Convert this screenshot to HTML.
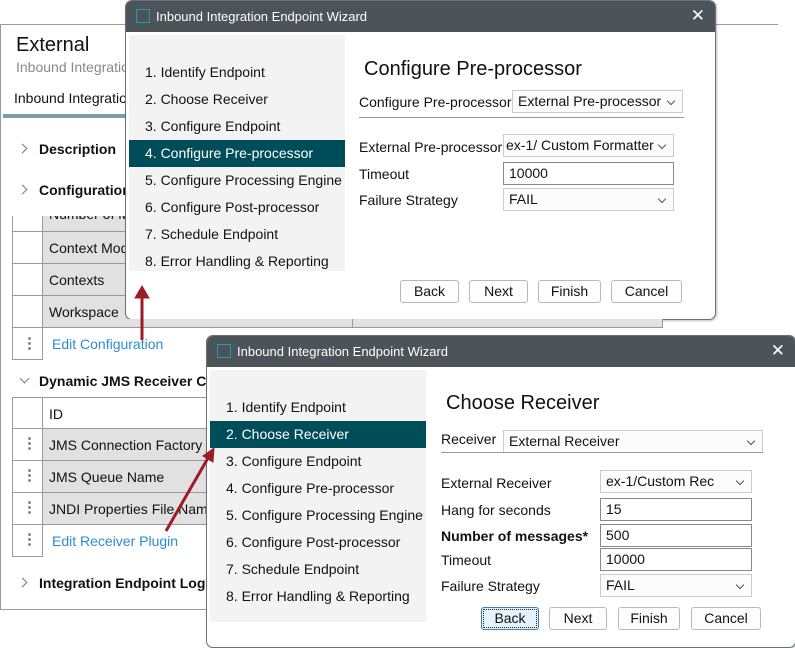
<!DOCTYPE html>
<html><head><meta charset="utf-8"><style>
*{margin:0;padding:0;box-sizing:border-box}
body{width:795px;height:647px;background:#fff;position:relative;overflow:hidden;font-family:"Liberation Sans",sans-serif;font-size:14px;color:#111}
.a{position:absolute;white-space:nowrap}
.dlg{position:absolute;background:#fff;border:1px solid #6b7175;border-radius:7px;overflow:hidden;box-shadow:1px 1px 2px rgba(0,0,0,.25)}
.tb{position:absolute;left:0;top:0;right:0;height:31px;background:#4d5459;color:#fff;font-size:13px}
.tb .ic{position:absolute;left:10px;top:8px;width:14px;height:14px;border:1.5px solid #1aa3b3}
.tb .t{position:absolute;left:30px;top:8px}
.tb .x{position:absolute;right:10px;top:5px;font-size:17px;font-weight:300}
.nav{position:absolute;background:#f3f3f3}
.nav div{position:absolute;left:0;right:0;height:27px;line-height:27px;padding-left:16px;font-size:14px;white-space:nowrap;overflow:hidden}
.nav .sel{background:#004d5a;color:#fff}
.fld{position:absolute;border:1px solid #b5b5b5;background:#fff;height:23px;line-height:21px;padding-left:5px;font-size:14px;white-space:nowrap;overflow:hidden}
.sl{border-color:#ccc;background:#fcfcfc}
.sl:after{content:"";position:absolute;right:8px;top:7px;width:5px;height:5px;border-right:1px solid #555;border-bottom:1px solid #555;transform:rotate(45deg)}
.btn{position:absolute;height:23px;border:1px solid #b8b8b8;border-radius:3px;background:#fdfdfd;text-align:center;line-height:21px;font-size:14px}
.h{position:absolute;font-size:20px}
.g{background:#e1e1e1}
.dots{position:absolute;width:3px}
.dots i{display:block;width:3px;height:3px;border-radius:50%;background:#888;margin-bottom:2px}
.chev{position:absolute;width:7px;height:7px;border-right:1.3px solid #777;border-top:1.3px solid #777;transform:rotate(45deg)}
.b{font-weight:bold}
</style></head><body>

<div class="a" style="left:0;top:24px;width:778px;height:1px;background:#9a9a9a"></div>
<div class="a" style="left:0;top:24px;width:1px;height:586px;background:#9a9a9a"></div>
<div class="a" style="left:0;top:609px;width:210px;height:1px;background:#9a9a9a"></div>
<div class="a" style="left:16px;top:34px;font-size:20px">External</div>
<div class="a" style="left:16px;top:59px;color:#888">Inbound Integration</div>
<div class="a" style="left:14px;top:90px">Inbound Integration</div>
<div class="a" style="left:3px;top:114px;width:125px;height:4px;background:#7a9ea6"></div>
<div class="chev" style="left:19px;top:145px"></div>
<div class="a b" style="left:39px;top:141px">Description</div>
<div class="chev" style="left:19px;top:186px"></div>
<div class="a b" style="left:39px;top:182px">Configuration</div>

<div class="a g" style="left:42px;top:216px;width:620px;height:111px"></div>
<div class="a" style="left:12px;top:216px;width:1px;height:144px;background:#999"></div>
<div class="a" style="left:42px;top:216px;width:1px;height:144px;background:#999"></div>
<div class="a" style="left:352px;top:216px;width:1px;height:111px;background:#999"></div>
<div class="a" style="left:662px;top:216px;width:1px;height:111px;background:#999"></div>
<div class="a" style="left:12px;top:231px;width:650px;height:1px;background:#999"></div>
<div class="a" style="left:12px;top:263px;width:650px;height:1px;background:#999"></div>
<div class="a" style="left:12px;top:295px;width:650px;height:1px;background:#999"></div>
<div class="a" style="left:12px;top:327px;width:650px;height:1px;background:#999"></div>
<div class="a" style="left:12px;top:359px;width:31px;height:1px;background:#999"></div>
<div class="a" style="left:49px;top:216px;height:6px;overflow:hidden;width:80px"><div style="margin-top:-10px">Number of M</div></div>
<div class="a" style="left:49px;top:240px">Context Mode</div>
<div class="a" style="left:49px;top:272px">Contexts</div>
<div class="a" style="left:49px;top:304px">Workspace</div>
<div class="dots" style="left:28px;top:337px"><i></i><i></i><i></i></div>
<div class="a" style="left:52px;top:336px;color:#2a8dd4">Edit Configuration</div>

<div class="chev" style="left:21px;top:375px;transform:rotate(135deg)"></div>
<div class="a b" style="left:39px;top:373px">Dynamic JMS Receiver Config</div>
<div class="a g" style="left:42px;top:428px;width:170px;height:96px"></div>
<div class="a" style="left:12px;top:397px;width:1px;height:160px;background:#999"></div>
<div class="a" style="left:42px;top:397px;width:1px;height:160px;background:#999"></div>
<div class="a" style="left:12px;top:397px;width:200px;height:1px;background:#999"></div>
<div class="a" style="left:12px;top:428px;width:200px;height:1px;background:#999"></div>
<div class="a" style="left:12px;top:460px;width:200px;height:1px;background:#999"></div>
<div class="a" style="left:12px;top:492px;width:200px;height:1px;background:#999"></div>
<div class="a" style="left:12px;top:524px;width:200px;height:1px;background:#999"></div>
<div class="a" style="left:12px;top:556px;width:31px;height:1px;background:#999"></div>
<div class="a" style="left:49px;top:406px">ID</div>
<div class="dots" style="left:28px;top:437px"><i></i><i></i><i></i></div>
<div class="a" style="left:49px;top:437px">JMS Connection Factory Name</div>
<div class="dots" style="left:28px;top:469px"><i></i><i></i><i></i></div>
<div class="a" style="left:49px;top:469px">JMS Queue Name</div>
<div class="dots" style="left:28px;top:501px"><i></i><i></i><i></i></div>
<div class="a" style="left:49px;top:501px">JNDI Properties File Name</div>
<div class="dots" style="left:28px;top:533px"><i></i><i></i><i></i></div>
<div class="a" style="left:52px;top:533px;color:#2a8dd4">Edit Receiver Plugin</div>
<div class="chev" style="left:19px;top:579px"></div>
<div class="a b" style="left:39px;top:575px">Integration Endpoint Log</div>

<div class="dlg" style="left:125px;top:0;width:591px;height:320px">
 <div class="tb"><div class="ic"></div><div class="t">Inbound Integration Endpoint Wizard</div><div class="x">✕</div></div>
 <div class="nav" style="left:3px;top:34px;width:216px;height:236px">
  <div style="top:24px">1. Identify Endpoint</div>
  <div style="top:51px">2. Choose Receiver</div>
  <div style="top:78px">3. Configure Endpoint</div>
  <div class="sel" style="top:105px">4. Configure Pre-processor</div>
  <div style="top:132px">5. Configure Processing Engine</div>
  <div style="top:159px">6. Configure Post-processor</div>
  <div style="top:186px">7. Schedule Endpoint</div>
  <div style="top:213px">8. Error Handling &amp; Reporting</div>
 </div>
 <div class="h" style="left:238px;top:57px">Configure Pre-processor</div>
 <div class="a" style="left:233px;top:93px">Configure Pre-processor</div>
 <div class="fld sl" style="left:386px;top:89px;width:171px">External Pre-processor</div>
 <div class="a" style="left:233px;top:116px;width:325px;height:1px;background:#999"></div>
 <div class="a" style="left:233px;top:138px">External Pre-processor</div>
 <div class="fld sl" style="left:377px;top:133px;width:171px;padding-left:2px">ex-1/ Custom Formatter</div>
 <div class="a" style="left:233px;top:165px">Timeout</div>
 <div class="fld" style="left:377px;top:161px;width:171px;border-color:#888">10000</div>
 <div class="a" style="left:233px;top:191px">Failure Strategy</div>
 <div class="fld sl" style="left:377px;top:187px;width:171px">FAIL</div>
 <div class="btn" style="left:274px;top:279px;width:59px">Back</div>
 <div class="btn" style="left:343px;top:279px;width:59px">Next</div>
 <div class="btn" style="left:412px;top:279px;width:63px">Finish</div>
 <div class="btn" style="left:485px;top:279px;width:71px">Cancel</div>
</div>
<div class="a" style="left:125px;top:319px;width:538px;height:9px;background:#e1e1e1;border-right:1px solid #999;border-bottom:1px solid #999"></div>
<div class="a" style="left:352px;top:319px;width:1px;height:8px;background:#999"></div>

<div class="dlg" style="left:206px;top:335px;width:590px;height:313px">
 <div class="tb"><div class="ic"></div><div class="t">Inbound Integration Endpoint Wizard</div><div class="x">✕</div></div>
 <div class="nav" style="left:3px;top:34px;width:216px;height:252px">
  <div style="top:24px">1. Identify Endpoint</div>
  <div class="sel" style="top:51px">2. Choose Receiver</div>
  <div style="top:78px">3. Configure Endpoint</div>
  <div style="top:105px">4. Configure Pre-processor</div>
  <div style="top:132px">5. Configure Processing Engine</div>
  <div style="top:159px">6. Configure Post-processor</div>
  <div style="top:186px">7. Schedule Endpoint</div>
  <div style="top:213px">8. Error Handling &amp; Reporting</div>
 </div>
 <div class="h" style="left:239px;top:56px">Choose Receiver</div>
 <div class="a" style="left:234px;top:95px">Receiver</div>
 <div class="fld sl" style="left:296px;top:94px;width:260px">External Receiver</div>
 <div class="a" style="left:234px;top:116px;width:322px;height:1px;background:#999"></div>
 <div class="a" style="left:234px;top:139px">External Receiver</div>
 <div class="fld sl" style="left:393px;top:134px;width:152px">ex-1/Custom Rec</div>
 <div class="a" style="left:234px;top:166px">Hang for seconds</div>
 <div class="fld" style="left:393px;top:162px;width:152px;border-color:#888">15</div>
 <div class="a b" style="left:234px;top:192px">Number of messages*</div>
 <div class="fld" style="left:393px;top:188px;width:152px;border-color:#888">500</div>
 <div class="a" style="left:234px;top:216px">Timeout</div>
 <div class="fld" style="left:393px;top:212px;width:152px;border-color:#888">10000</div>
 <div class="a" style="left:234px;top:242px">Failure Strategy</div>
 <div class="fld sl" style="left:393px;top:238px;width:152px">FAIL</div>
 <div class="btn" style="left:274px;top:271px;width:58px;background:#e5f1fb;border-color:#3c7fb1;outline:1px dotted #222;outline-offset:-3px">Back</div>
 <div class="btn" style="left:342px;top:271px;width:58px">Next</div>
 <div class="btn" style="left:411px;top:271px;width:62px">Finish</div>
 <div class="btn" style="left:484px;top:271px;width:70px">Cancel</div>
</div>

<svg class="a" style="left:0;top:0" width="795" height="647">
 <g stroke="#9b1c24" stroke-width="3" fill="#9b1c24">
  <line x1="142" y1="340" x2="142" y2="296"/>
  <polygon points="142,286 135,298 149,298" stroke-width="1"/>
  <line x1="166" y1="531" x2="208" y2="458"/>
  <polygon points="214,448 203,456 213,462" stroke-width="1"/>
 </g>
</svg>
</body></html>
